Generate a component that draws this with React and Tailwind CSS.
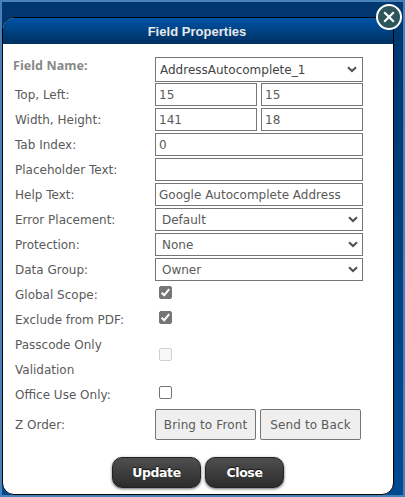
const Chevron = ({ className }) => (
  <svg className={className} width="10" height="7" viewBox="0 0 10 7" fill="none" stroke="#505050" strokeWidth="2">
    <path d="M1 1.2 L5 5 L9 1.2" />
  </svg>
);

const Row = ({ label, children }) => (
  <div className="flex h-[25px]">
    <div className="w-[140px] whitespace-nowrap leading-[24px]">{label}</div>
    <div className="flex w-[208px] justify-between">{children}</div>
  </div>
);

const Input = ({ children }) => (
  <div className="h-[23px] flex-1 border border-[#767676] pl-[3px] leading-[22px] whitespace-nowrap">{children}</div>
);

const Select = ({ children }) => (
  <div className="flex h-[23px] w-full items-start justify-between border border-[#767676] pl-[6px] pr-[4px] leading-[22px]">
    <span>{children}</span>
    <Chevron className="mt-[7px]" />
  </div>
);

const Check = ({ checked, disabled }) => (
  <div
    className={`ml-[4px] mt-[3px] h-[13px] w-[13px] shrink-0 rounded-[2px] border ${
      checked ? "border-[#767676] bg-[#767676]" : disabled ? "border-[#d0d0d0] bg-[#f8f8f8]" : "border-[#767676] bg-white"
    }`}
  >
    {checked && (
      <svg width="11" height="11" viewBox="0 0 11 11" fill="none" stroke="white" strokeWidth="2">
        <path d="M1.6 5.8 L4.2 8.2 L9.2 2.2" />
      </svg>
    )}
  </div>
);

const Pill = ({ children, className }) => (
  <div
    className={`h-[31px] rounded-[10px] border border-[#222] bg-linear-to-b from-[#4f4f4f] to-[#2c2c2c] text-center text-[12.5px] leading-[29px] font-bold tracking-[-0.4px] text-white shadow-[0_1px_3px_rgba(0,0,0,0.6)] [font-family:'DejaVu_Sans',sans-serif] [text-shadow:0_-1px_1px_#111] ${className}`}
  >
    {children}
  </div>
);

const Flat = ({ children }) => (
  <div className="h-[31px] w-[101px] rounded-[2px] border border-[#767676] bg-[#efefef] text-center leading-[30px] tracking-[0.12px] whitespace-nowrap">
    {children}
  </div>
);

export default function App() {
  return (
    <div className="relative h-[497px] w-[405px] overflow-hidden border-2 border-[#4682b9] bg-linear-to-b from-[#00376e] to-[#004a91] pt-[15px] text-[12px] text-[#5a5a5a] [font-family:'DejaVu_Sans',sans-serif]">
      <div className="flex h-[478px] w-[392px] flex-col overflow-hidden rounded-[12px] border border-black bg-white">
        <div className="h-[26px] shrink-0 bg-linear-to-b from-[#0054a8] to-[#003060] pr-[2px] text-center text-[13px] leading-[27px] font-bold tracking-[0.03px] text-[#e8e8e8] [font-family:'Liberation_Sans',Arial,sans-serif]">
          Field Properties
        </div>
        <div className="pt-[13px] pl-[12px]">
          <div className="flex h-[26px]">
            <div className="-ml-[2px] w-[142px] text-[12.5px] leading-[17px] font-bold tracking-[0.08px] text-[#888] [font-family:'Noto_Sans',sans-serif]">Field Name:</div>
            <div className="flex h-[25px] w-[208px] items-center justify-between border border-[#767676] pl-[4px] pr-[5px] text-[#444]">
              <span>AddressAutocomplete_1</span>
              <Chevron />
            </div>
          </div>
          <Row label="Top, Left:">
            <div className="flex w-full gap-[4px]"><Input>15</Input><Input>15</Input></div>
          </Row>
          <Row label="Width, Height:">
            <div className="flex w-full gap-[4px]"><Input>141</Input><Input>18</Input></div>
          </Row>
          <Row label="Tab Index:"><Input>0</Input></Row>
          <Row label="Placeholder Text:"><Input /></Row>
          <Row label="Help Text:"><Input>Google Autocomplete Address</Input></Row>
          <Row label="Error Placement:"><Select>Default</Select></Row>
          <Row label="Protection:"><Select>None</Select></Row>
          <Row label="Data Group:"><Select>Owner</Select></Row>
          <Row label="Global Scope:"><Check checked /></Row>
          <Row label="Exclude from PDF:"><Check checked /></Row>
          <div className="flex h-[50px]">
            <div className="w-[140px] leading-[25px]">Passcode Only<br />Validation</div>
            <div className="pt-[12px]"><Check disabled /></div>
          </div>
          <Row label="Office Use Only:"><Check /></Row>
          <div className="flex pt-px">
            <div className="w-[140px] leading-[32px]">Z Order:</div>
            <div className="flex gap-[4px]"><Flat>Bring to Front</Flat><Flat>Send to Back</Flat></div>
          </div>
        </div>
        <div className="mt-[16px] flex gap-[4px] pl-[109px]">
          <Pill className="w-[89px]">Update</Pill>
          <Pill className="w-[79px]">Close</Pill>
        </div>
      </div>
      <svg className="absolute top-[1px] left-[373px]" width="28" height="28" viewBox="0 0 28 28" fill="none">
        <circle cx="14" cy="14" r="12" fill="#2c555c" stroke="white" strokeWidth="2" />
        <path d="M9.2 9.2 L18.8 18.8 M18.8 9.2 L9.2 18.8" stroke="white" strokeWidth="2.2" />
      </svg>
    </div>
  );
}
